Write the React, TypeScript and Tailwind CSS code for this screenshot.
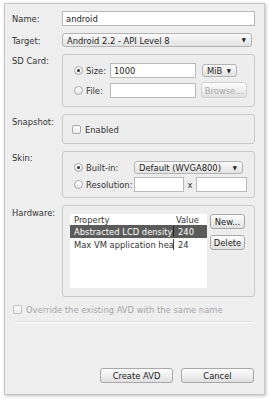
import type { ReactNode } from 'react'

const font = { fontFamily: '"DejaVu Sans Condensed", "DejaVu Sans", Verdana, sans-serif' }

const Radio = ({ checked = false }: { checked?: boolean }) => (
  <span className="flex size-[9px] shrink-0 items-center justify-center rounded-full border border-[#a9a9a9] bg-gradient-to-b from-white to-[#e6e6e6]">
    {checked && <span className="size-[3px] rounded-full bg-[#333]" />}
  </span>
)

const Check = ({ disabled = false }: { disabled?: boolean }) => (
  <span
    className={`size-[9px] shrink-0 rounded-[2px] border bg-gradient-to-b from-white to-[#ececec] ${
      disabled ? 'border-[#c4c4c4]' : 'border-[#a9a9a9]'
    }`}
  />
)

const Input = ({ value = '', className = '' }: { value?: string; className?: string }) => (
  <div className={`flex items-center border border-[#b9b9b9] bg-white pl-[3px] text-[#222] ${className}`}>
    {value}
  </div>
)

const Select = ({ value, className = '' }: { value: string; className?: string }) => (
  <div
    className={`flex items-center justify-between rounded-[3px] border border-[#b4b4b4] bg-gradient-to-b from-[#fbfbfb] to-[#e2e2e2] pl-[4px] pr-[5px] text-[#222] ${className}`}
  >
    <span className="whitespace-nowrap">{value}</span>
    <span className="text-[6px] leading-none">▼</span>
  </div>
)

const Button = ({ label, disabled = false, className = '' }: { label: string; disabled?: boolean; className?: string }) => (
  <div
    className={`flex items-center justify-center whitespace-nowrap rounded-[3px] border bg-gradient-to-b from-[#fdfdfd] to-[#e0e0e0] ${
      disabled ? 'border-[#cfcfcf] text-[#a8a8a8]' : 'border-[#a8a8a8] text-[#222]'
    } ${className}`}
  >
    {label}
  </div>
)

const Group = ({ className = '', children }: { className?: string; children: ReactNode }) => (
  <div className={`w-[193px] rounded-[3px] border border-[#c9c9c9] bg-[#ededed] ${className}`}>{children}</div>
)

const Label = ({ text, className = '' }: { text: string; className?: string }) => (
  <div className={`w-[50px] shrink-0 text-[#333] ${className}`}>{text}</div>
)

export default function App() {
  return (
    <div className="h-[400px] w-[270px] bg-white pl-[4px] pt-[3px] text-[9.3px] leading-[11px]" style={font}>
      <div className="flex h-[392px] w-[261px] flex-col border border-[#c6c6c6] bg-[#eeeeee] pl-[7px] pr-[9px] pt-[7px] shadow-[1px_1px_3px_rgba(0,0,0,0.25)]">

        {/* Name */}
        <div className="flex items-center">
          <Label text="Name:" />
          <Input value="android" className="h-[15px] w-[193px]" />
        </div>

        {/* Target */}
        <div className="mt-[7px] flex items-center">
          <Label text="Target:" />
          <Select value="Android 2.2 - API Level 8" className="h-[14px] w-[190px]" />
        </div>

        {/* SD Card */}
        <div className="mt-[7px] flex items-start">
          <Label text="SD Card:" className="pt-[1px]" />
          <Group className="h-[53px] pl-[11px] pt-[8px]">
            <div className="flex items-center">
              <Radio checked />
              <span className="ml-[3px] w-[24px] text-[#333]">Size:</span>
              <Input value="1000" className="h-[15px] w-[86px]" />
              <Select value="MiB" className="ml-[6px] h-[13px] w-[35px]" />
            </div>
            <div className="mt-[4px] flex items-center">
              <Radio />
              <span className="ml-[3px] w-[24px] text-[#333]">File:</span>
              <Input className="h-[15px] w-[86px]" />
              <Button label="Browse..." disabled className="ml-[5px] h-[16px] w-[46px]" />
            </div>
          </Group>
        </div>

        {/* Snapshot */}
        <div className="mt-[7px] flex items-start">
          <Label text="Snapshot:" className="pt-[2px]" />
          <Group className="flex h-[30px] items-center pl-[9px]">
            <Check />
            <span className="ml-[4px] text-[#333]">Enabled</span>
          </Group>
        </div>

        {/* Skin */}
        <div className="mt-[7px] flex items-start">
          <Label text="Skin:" className="pt-[1px]" />
          <Group className="h-[47px] pl-[11px] pt-[9px]">
            <div className="flex items-center">
              <Radio checked />
              <span className="ml-[3px] w-[48px] text-[#333]">Built-in:</span>
              <Select value="Default (WVGA800)" className="h-[13px] w-[109px]" />
            </div>
            <div className="mt-[3px] flex items-center">
              <Radio />
              <span className="ml-[3px] w-[48px] text-[#333]">Resolution:</span>
              <Input className="h-[15px] w-[50px]" />
              <span className="w-[12px] text-center text-[#333]">x</span>
              <Input className="h-[15px] w-[51px]" />
            </div>
          </Group>
        </div>

        {/* Hardware */}
        <div className="mt-[7px] flex items-start">
          <Label text="Hardware:" className="pt-[2px]" />
          <Group className="flex h-[92px] gap-[3px] pl-[7px] pt-[8px]">
            <div className="h-[74px] w-[137px] bg-white text-[#333]">
              <div className="flex h-[11px] items-center">
                <span className="w-[104px] pl-[4px]">Property</span>
                <span className="pl-[2px]">Value</span>
              </div>
              <div className="flex h-[13px] items-center bg-[#5b5b5b] text-white">
                <span className="w-[104px] overflow-hidden whitespace-nowrap border-r border-[#222] pl-[4px]">Abstracted LCD density</span>
                <span className="pl-[4px]">240</span>
              </div>
              <div className="flex h-[13px] items-center">
                <span className="w-[104px] overflow-hidden whitespace-nowrap border-r border-[#444] pl-[4px]">Max VM application heap size</span>
                <span className="pl-[4px]">24</span>
              </div>
            </div>
            <div className="flex flex-col gap-[6px]">
              <Button label="New..." className="h-[15px] w-[35px]" />
              <Button label="Delete" className="h-[15px] w-[35px]" />
            </div>
          </Group>
        </div>

        {/* Override */}
        <div className="mt-[7px] flex items-center pl-[1px]">
          <Check disabled />
          <span className="ml-[4px] text-[#a6a6a6]">Override the existing AVD with the same name</span>
        </div>
        <div className="ml-[3px] mr-[5px] mt-[6px] border-t border-[#dcdcdc] border-b-white border-b" />

        {/* Footer buttons */}
        <div className="mt-auto mb-[11px] flex justify-end gap-[8px] pr-[1px]">
          <Button label="Create AVD" className="h-[15px] w-[73px]" />
          <Button label="Cancel" className="h-[15px] w-[73px]" />
        </div>
      </div>
    </div>
  )
}
